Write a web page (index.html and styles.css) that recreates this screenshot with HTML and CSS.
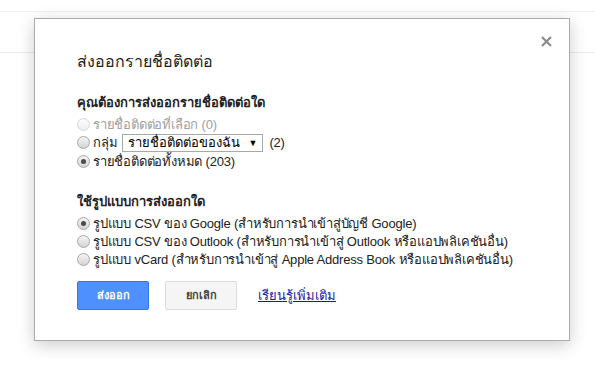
FILE: index.html
```html
<!DOCTYPE html>
<html lang="th">
<head>
	<meta charset="utf-8">
	<title>ส่งออกรายชื่อติดต่อ</title>
	<link rel="stylesheet" href="styles.css">
</head>
<body>
	<div class="page-top"></div>
	<div class="page-toolbar"></div>

	<div class="modal-dialog">
		<a class="modal-close" title="ปิด">
			<svg width="11" height="11" viewBox="0 0 11 11">
				<path d="M1 1L10 10M10 1L1 10" stroke="#8c8c8c" stroke-width="2.2" fill="none"/>
			</svg>
		</a>
		<div class="modal-title">ส่งออกรายชื่อติดต่อ</div>

		<div class="section-heading first">คุณต้องการส่งออกรายชื่อติดต่อใด</div>
		<div class="option disabled">
			<span class="radio"></span>รายชื่อติดต่อที่เลือก (0)
		</div>
		<div class="option option-select">
			<span class="radio"></span>กลุ่ม
			<span class="select-box">รายชื่อติดต่อของฉัน<span class="select-arrow">▼</span></span>
			(2)
		</div>
		<div class="option">
			<span class="radio checked"></span>รายชื่อติดต่อทั้งหมด (203)
		</div>

		<div class="section-heading">ใช้รูปแบบการส่งออกใด</div>
		<div class="option">
			<span class="radio checked"></span>รูปแบบ CSV ของ Google (สำหรับการนำเข้าสู่บัญชี Google)
		</div>
		<div class="option">
			<span class="radio"></span>รูปแบบ CSV ของ Outlook (สำหรับการนำเข้าสู่ Outlook หรือแอปพลิเคชันอื่น)
		</div>
		<div class="option">
			<span class="radio"></span>รูปแบบ vCard (สำหรับการนำเข้าสู่ Apple Address Book หรือแอปพลิเคชันอื่น)
		</div>

		<div class="modal-buttons">
			<div class="button button-action">ส่งออก</div>
			<div class="button">ยกเลิก</div>
			<a class="learn-more" href="#">เรียนรู้เพิ่มเติม</a>
		</div>
	</div>
</body>
</html>
```

FILE: styles.css
```css
html, body {
	height: 100%;
	margin: 0;
	padding: 0;
}
body {
	background: #fff;
	font-family: Arial, "Liberation Sans", sans-serif;
	font-size: 13px;
	color: #222;
}
.page-top {
	height: 11px;
	border-bottom: 1px solid #f1f1f1;
}
.page-toolbar {
	height: 40px;
	border-bottom: 1px solid #ebebeb;
}

.modal-dialog {
	position: absolute;
	left: 34px;
	top: 18px;
	width: 492px;
	height: 290px;
	padding: 31px 0 0 42px;
	background: #fff;
	border: 1px solid #acacac;
	box-shadow: 0 4px 16px rgba(0, 0, 0, 0.2);
}
.modal-close {
	position: absolute;
	top: 17px;
	right: 17px;
	width: 11px;
	height: 11px;
	cursor: pointer;
}
.modal-close svg {
	display: block;
}
.modal-title {
	font-size: 16px;
	line-height: 24px;
	color: #222;
}

.section-heading {
	font-weight: bold;
	line-height: 18px;
	margin: 23px 0 3px;
}
.section-heading.first {
	margin-top: 20px;
}
.option {
	display: flex;
	align-items: center;
	height: 18px;
	white-space: nowrap;
	letter-spacing: -0.2px;
}
.option.disabled {
	color: #a0a0a0;
}
.option-select {
	height: 19px;
}
.radio {
	box-sizing: border-box;
	width: 13px;
	height: 13px;
	margin: 0 3px 0 0;
	border: 1px solid #a8a8a8;
	border-radius: 50%;
	background: linear-gradient(#f4f4f4, #d4d4d4);
	position: relative;
}
.option.disabled .radio {
	border-color: #d8d8d8;
	background: linear-gradient(#fbfbfb, #efefef);
}
.radio.checked::after {
	content: "";
	position: absolute;
	left: 3px;
	top: 3px;
	width: 5px;
	height: 5px;
	border-radius: 50%;
	background: #4a4a4a;
}
.select-box {
	display: flex;
	align-items: center;
	box-sizing: border-box;
	width: 141px;
	height: 18px;
	margin: 0 6px 0 5px;
	padding: 0 5px;
	border: 1px solid #a9a9a9;
	color: #000;
	letter-spacing: 0;
}
.select-arrow {
	margin-left: auto;
	font-size: 9px;
}

.modal-buttons {
	display: flex;
	align-items: center;
	margin-top: 13px;
}
.button {
	box-sizing: border-box;
	min-width: 72px;
	height: 29px;
	line-height: 27px;
	padding: 0 8px;
	margin-right: 16px;
	text-align: center;
	font-size: 11px;
	font-weight: bold;
	color: #444;
	background: #f5f5f5;
	border: 1px solid #dcdcdc;
	border-radius: 2px;
	cursor: pointer;
}
.button-action {
	color: #fff;
	background: #4d90fe;
	border-color: #3079ed;
}
.learn-more {
	margin-left: 5px;
	color: #1a1aa6;
	text-decoration: underline;
}
```
